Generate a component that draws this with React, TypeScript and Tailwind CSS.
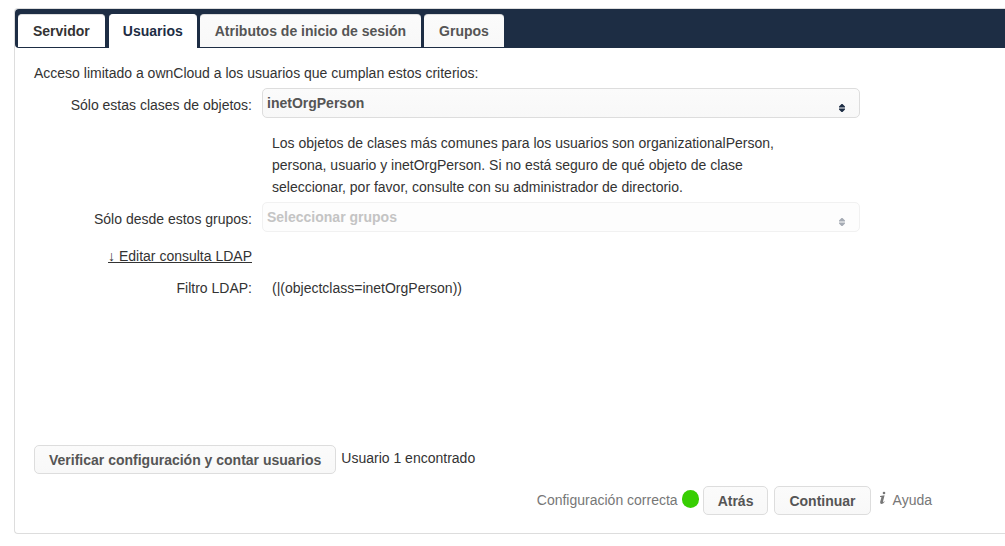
import { useState } from "react";

const tabs = ["Servidor", "Usuarios", "Atributos de inicio de sesión", "Grupos"];

const buttonClass =
  "h-[29px] cursor-pointer rounded-[5px] border border-[#ddd] bg-linear-to-b from-[#fbfbfb] to-[#f8f8f8] px-3.5 font-bold text-[#555]";

function SortIcon({ faded = false }: { faded?: boolean }) {
  return (
    <svg
      viewBox="0 0 6 8"
      className={
        "pointer-events-none absolute right-[15px] bottom-1.5 h-2 w-1.5 " +
        (faded ? "fill-[#a5abb4]" : "fill-[#1d2d44]")
      }
      aria-hidden="true"
    >
      <path d="M2.5 0H3.5L6 2.6V3.5H0V2.6zM0 4.5H6V5.4L3.5 8H2.5L0 5.4z" />
    </svg>
  );
}

function tabClass(index: number, active: number) {
  const base = "cursor-pointer rounded-t-[4px] border-t font-bold ";
  if (index === active) return base + "ml-px h-[34px] border-white bg-white px-3.5 pb-0.5 text-[#1d2d44]";
  if (index < active) return base + "h-[33px] border-[#ddd] bg-white px-[15px] text-[#333]";
  return base + "h-[33px] border-[#ddd] bg-linear-to-b from-[#fbfbfb] to-[#f8f8f8] px-[15px] text-[#555]";
}

export default function App() {
  const [active, setActive] = useState(1);

  return (
    <main className="min-h-screen bg-white pt-2 pb-3 pl-3.5 font-['Liberation_Sans',Arial,sans-serif] text-sm leading-[22px] text-[#333]">
      <section className="rounded-l-[4px] border border-r-0 border-[#ddd]">
        <div
          role="tablist"
          className="flex h-[39px] items-start gap-[3px] rounded-l-[4px] bg-[#1d2d44] pt-[5px] pl-[3px]"
        >
          {tabs.map((tab, index) => (
            <button
              key={tab}
              type="button"
              role="tab"
              aria-selected={index === active}
              onClick={() => setActive(index)}
              className={tabClass(index, active)}
            >
              {tab}
            </button>
          ))}
        </div>

        <div className="px-[19px] pt-3.5 pb-[18px]">
          <p>Acceso limitado a ownCloud a los usuarios que cumplan estos criterios:</p>

          <div className="mt-1 grid grid-cols-[218px_minmax(0,598px)] gap-x-2.5">
            <label htmlFor="classes" className="pt-1.5 text-right">
              Sólo estas clases de objetos:
            </label>
            <div className="relative">
              <select
                id="classes"
                className="block h-[30px] w-full appearance-none rounded-[5px] border border-[#ddd] bg-linear-to-b from-[#fbfbfb] to-[#f8f8f8] px-1 font-bold text-[#555]"
              >
                <option>inetOrgPerson</option>
              </select>
              <SortIcon />
            </div>

            <p className="col-start-2 mt-3.5 mb-1 max-w-[520px] pl-2.5">
              Los objetos de clases más comunes para los usuarios son organizationalPerson, persona,
              usuario y inetOrgPerson. Si no está seguro de qué objeto de clase seleccionar, por
              favor, consulte con su administrador de directorio.
            </p>

            <label htmlFor="groups" className="pt-1.5 text-right">
              Sólo desde estos grupos:
            </label>
            <div className="relative">
              <select
                id="groups"
                disabled
                className="block h-[30px] w-full appearance-none rounded-[5px] border border-[#f1f1f1] bg-[#fdfdfd] px-1 font-bold text-[#c4c4c4] opacity-100"
              >
                <option>Seleccionar grupos</option>
              </select>
              <SortIcon faded />
            </div>

            <a href="#filtro" className="mt-[13px] justify-self-end underline">
              ↓ Editar consulta LDAP
            </a>

            <span className="col-start-1 mt-2.5 text-right">Filtro LDAP:</span>
            <span id="filtro" className="mt-2.5 pl-2.5">
              (|(objectclass=inetOrgPerson))
            </span>
          </div>

          <div className="mt-[146px] flex items-start gap-[5px]">
            <button type="button" className={buttonClass}>
              Verificar configuración y contar usuarios
            </button>
            <span className="pt-0.5">Usuario 1 encontrado</span>
          </div>

          <div className="mt-3 flex max-w-[898px] items-start justify-end text-[#777]">
            <span className="pt-[3px]">Configuración correcta</span>
            <span className="mx-1 mt-1 h-[18px] w-[17px] rounded-full bg-[#37ce02]" />
            <button type="button" className={buttonClass}>
              Atrás
            </button>
            <button type="button" className={buttonClass + " ml-1.5"}>
              Continuar
            </button>
            <a href="#ayuda" className="ml-2 flex gap-1.5 pt-[3px]">
              <svg viewBox="0 0 8 14" className="mt-0.5 h-3.5 w-2 fill-[#777]" aria-hidden="true">
                <circle cx="5" cy="2" r="1.3" />
                <path d="M1.1 5.1 5.6 4.3 4 10.6Q3.8 11.5 4.4 11.1L5.2 10.3 5.7 10.7Q3.9 13.1 2.3 13 0.7 12.8 1.2 10.8L2.4 6.4Q2.5 5.9 2 5.9L1 6Z" />
              </svg>
              Ayuda
            </a>
          </div>
        </div>
      </section>
    </main>
  );
}
